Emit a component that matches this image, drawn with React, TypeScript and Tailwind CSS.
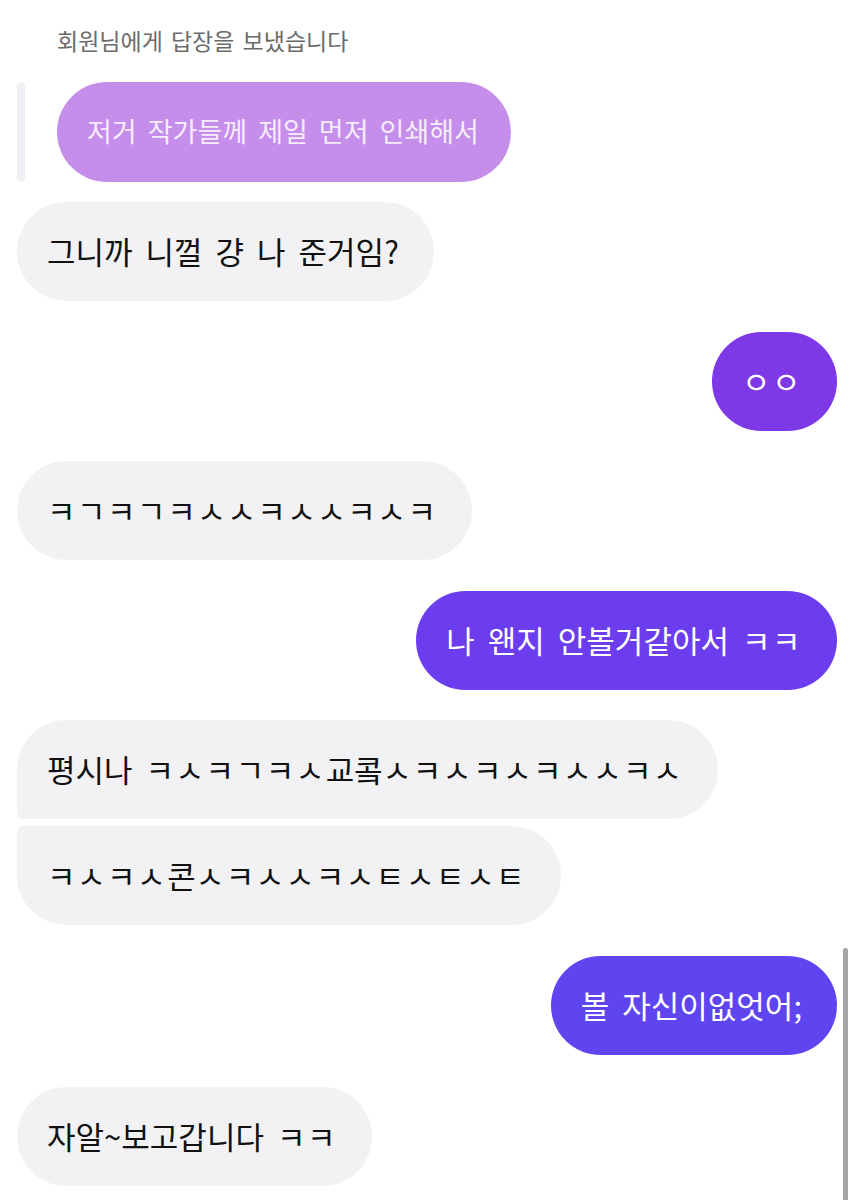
import React from 'react';

type Side = 'in' | 'out';

interface BubbleProps {
  text: string;
  side: Side;
  color?: string;
  shape?: string;
  className?: string;
}

const isJamo = (ch: string) => {
  const c = ch.charCodeAt(0);
  return c >= 0x3131 && c <= 0x318e;
};

// jamo in the phone font sit a bit wider than in Noto, so give them a little tracking
const renderText = (text: string) =>
  Array.from(text).map((ch, i) =>
    isJamo(ch) ? (
      <span key={i} className="tracking-[1.5px]">
        {ch}
      </span>
    ) : (
      <React.Fragment key={i}>{ch}</React.Fragment>
    )
  );

const Bubble: React.FC<BubbleProps> = ({ text, side, color, shape = 'rounded-full', className = '' }) => {
  const base = side === 'in' ? 'bg-[#f2f2f5] text-[#111111]' : `${color} text-white`;
  return (
    <div className={`flex ${side === 'in' ? 'justify-start' : 'justify-end'} ${className}`}>
      <div
        className={`${base} ${shape} h-[99px] pl-[30px] pr-[35px] pb-[3px] flex items-center text-[31px] leading-none whitespace-pre [word-spacing:6px]`}
      >
        {renderText(text)}
      </div>
    </div>
  );
};

export default function App() {
  return (
    <div className="relative w-[857px] h-[1200px] overflow-hidden bg-white font-['Noto_Sans_CJK_KR','Noto_Sans',sans-serif]">
      <div className="flex flex-col pl-[17px] pr-[20px]">
        <div className="mt-[25px] h-[30px] pl-[40px] flex items-center text-[23px] text-[#6b6b6b] [word-spacing:3px]">
          회원님에게 답장을 보냈습니다
        </div>

        {/* quoted reply */}
        <div className="mt-[27px] flex items-stretch h-[100px]">
          <div className="w-[8px] rounded-full bg-[#eef0f4]" />
          <div className="ml-[32px] rounded-full bg-[#c48eea] pl-[30px] pr-[32px] pb-[3px] flex items-center text-[27px] leading-none text-[#f6ecfc] [word-spacing:5px]">
            저거 작가들께 제일 먼저 인쇄해서
          </div>
        </div>

        <Bubble className="mt-[20px]" side="in" text="그니까 니껄 걍 나 준거임?" />
        <Bubble className="mt-[31px]" side="out" color="bg-[#7f38e7]" text="ㅇㅇ" />
        <Bubble className="mt-[30px]" side="in" text="ㅋㄱㅋㄱㅋㅅㅅㅋㅅㅅㅋㅅㅋ" />
        <Bubble className="mt-[31px]" side="out" color="bg-[#6c3cef]" text="나 왠지 안볼거같아서 ㅋㅋ" />
        <Bubble
          className="mt-[30px]"
          side="in"
          shape="rounded-[50px] rounded-bl-[6px]"
          text="평시나 ㅋㅅㅋㄱㅋㅅ교콬ㅅㅋㅅㅋㅅㅋㅅㅅㅋㅅ"
        />
        <Bubble
          className="mt-[7px]"
          side="in"
          shape="rounded-[50px] rounded-tl-[6px]"
          text="ㅋㅅㅋㅅ콘ㅅㅋㅅㅅㅋㅅㅌㅅㅌㅅㅌ"
        />
        <Bubble className="mt-[31px]" side="out" color="bg-[#5e45ef]" text="볼 자신이없엇어;" />
        <Bubble className="mt-[32px]" side="in" text="자알~보고갑니다 ㅋㅋ" />
      </div>

      {/* scrollbar */}
      <div className="absolute left-[843px] top-[948px] w-[5px] h-[260px] rounded-full bg-[#a4a4a4]" />
    </div>
  );
}
